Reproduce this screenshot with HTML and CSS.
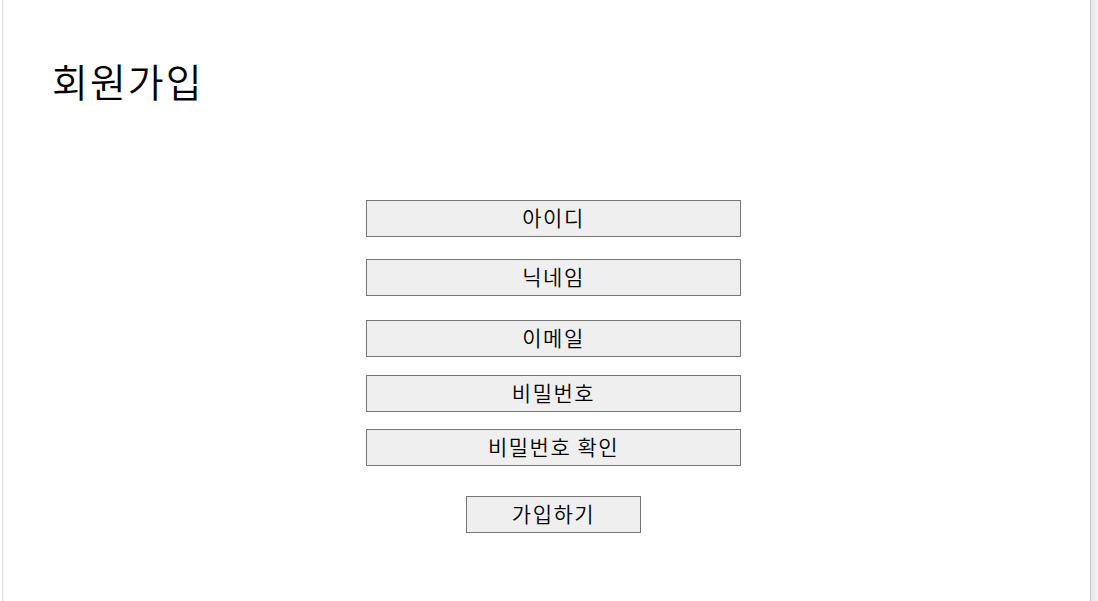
FILE: index.html
```html
<html>

<head>
   <title>회원가입</title>
   <link rel="stylesheet" href="styles.css">
</head>

<body>
   <div class="window">
      <div class="page">
         <h1 class="title">회원가입</h1>

         <form class="signup">
            <input class="field field-id" type="text" value="아이디" />
            <input class="field field-nick" type="text" value="닉네임" />
            <input class="field field-email" type="text" value="이메일" />
            <input class="field field-pw" type="text" value="비밀번호" />
            <input class="field field-pw2" type="text" value="비밀번호 확인" />
            <button class="submit" type="button">가입하기</button>
         </form>
      </div>
      <div class="scrollbar"></div>
   </div>
</body>

</html>
```

FILE: styles.css
```css
html,
body {
   margin: 0;
   padding: 0;
   background: #fff;
   height: 100%;
   overflow: hidden;
}

body {
   font-family: "Noto Sans CJK KR", "Noto Sans", sans-serif;
   color: #000;
}

.window {
   display: flex;
   height: 601px;
   padding-left: 2px;
}

.page {
   flex: 1;
   border-left: 1px solid #dcdcdc;
   border-right: 1px solid #c8c8c8;
}

.scrollbar {
   width: 7px;
   background: linear-gradient(to right, #e6e6e8, #f4f4f6);
}

.title {
   margin: 0;
   padding: 54px 0 0 49px;
   font-size: 39px;
   font-weight: 350;
   letter-spacing: 2px;
   line-height: 52px;
}

.signup {
   display: flex;
   flex-direction: column;
   align-items: center;
   margin: 94px 0 0 0;
   padding-left: 14px;
}

.field,
.submit {
   box-sizing: border-box;
   height: 37px;
   margin: 0;
   padding: 0 0 3px 0;
   border: 1px solid #767676;
   background: #efefef;
   font-family: "Noto Sans CJK KR", "Noto Sans", sans-serif;
   font-size: 21px;
   font-weight: 350;
   letter-spacing: 1.5px;
   color: #000;
   text-align: center;
   outline: none;
}

.field {
   width: 375px;
}

.field-nick {
   margin-top: 22px;
}

.field-email {
   margin-top: 24px;
}

.field-pw {
   margin-top: 18px;
}

.field-pw2 {
   margin-top: 17px;
}

.submit {
   width: 175px;
   margin-top: 30px;
}
```
